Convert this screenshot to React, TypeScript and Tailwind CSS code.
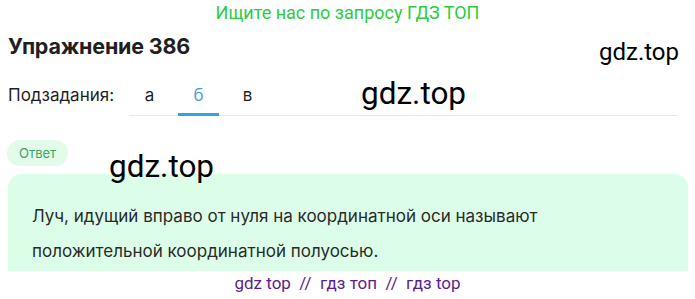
export default function App() {
  const tabs = ["а", "б", "в"];
  return (
    <div className="relative w-[695px] h-[299px] overflow-hidden bg-white font-['Inter','Noto_Sans',sans-serif] text-[#1f1f1f]">
      {/* top promo line */}
      <div className="h-[24px] flex items-center justify-center font-['Roboto',sans-serif] text-[18px] text-[#2ecc40]">
        Ищите нас по запросу ГДЗ ТОП
      </div>

      {/* title */}
      <h1 className="mt-[8px] px-[8px] text-[21.5px] font-bold leading-[28px] tracking-[-0.2px]">
        Упражнение 386
      </h1>

      {/* subtasks */}
      <div className="mt-[25px] flex items-end px-[8px]">
        <span className="pb-[11px] text-[17px] leading-[20px]">Подзадания:</span>
        <div className="ml-[15px] mr-[9px] flex flex-1 gap-[8px] border-b border-[#e5e7eb]">
          {tabs.map((t) => (
            <div
              key={t}
              className={
                t === "б"
                  ? "w-[41px] -mb-px pb-[8px] text-center text-[17px] leading-[20px] text-[#4a9fd0] border-b-[3px] border-[#2fa6e0]"
                  : "w-[41px] -mb-px pb-[8px] text-center text-[17px] leading-[20px] border-b-[3px] border-transparent"
              }
            >
              {t}
            </div>
          ))}
        </div>
      </div>

      {/* answer */}
      <div className="mt-[24px] flex px-[7px]">
        <span className="rounded-full bg-[#e3fbe9] px-[12px] py-[5px] text-[13px] leading-[16px] text-[#3aa56a]">
          Ответ
        </span>
      </div>
      <div className="mt-[8px] ml-[8px] mr-[7px] rounded-t-[14px] bg-[#dcfde8] px-[24px] pt-[25px] pb-[2px] text-[17px] leading-[35px] text-[#2a2a2a]">
        <p>Луч, идущий вправо от нуля на координатной оси называют</p>
        <p>положительной координатной полуосью.</p>
      </div>

      {/* footer */}
      <div className="text-center font-['Roboto',sans-serif] text-[17px] leading-[24px] text-[#5b1d8f] whitespace-pre">
        {"gdz top  //  гдз топ  //  гдз top"}
      </div>

      {/* watermarks */}
      <span className="absolute left-[599px] top-[38px] font-['Roboto',sans-serif] text-[24px] leading-[28px] text-black">
        gdz.top
      </span>
      <span className="absolute left-[361px] top-[74px] font-['Roboto',sans-serif] text-[31.5px] leading-[40px] text-black">
        gdz.top
      </span>
      <span className="absolute left-[109px] top-[147px] font-['Roboto',sans-serif] text-[31.5px] leading-[40px] text-black">
        gdz.top
      </span>
    </div>
  );
}
